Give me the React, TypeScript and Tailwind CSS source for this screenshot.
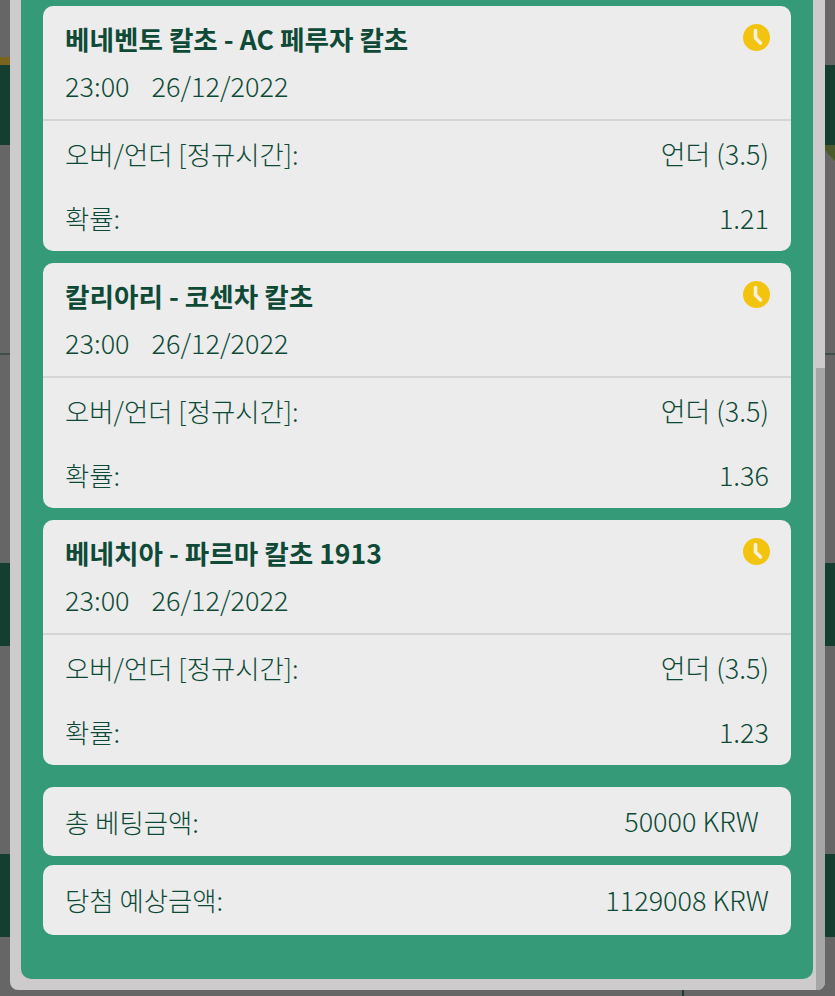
const font = { fontFamily: '"Noto Sans CJK KR", "Noto Sans", sans-serif' };

function Clock() {
  return (
    <svg width="27" height="27" viewBox="0 0 27 27" className="absolute right-[21px] top-[18px]">
      <circle cx="13.5" cy="13.5" r="13.5" fill="#f2c40f" />
      <path d="M12.5 6.5 V14 L17.5 19" fill="none" stroke="#f4f0dc" strokeWidth="3.6" strokeLinecap="round" strokeLinejoin="round" />
    </svg>
  );
}

function Row({ label, value, className = "" }: { label: string; value: string; className?: string }) {
  return (
    <div className={`flex items-center justify-between pl-[22px] pr-[22px] leading-[36px] font-light text-[#0c4a35] ${className}`}>
      <span className="text-[26.4px]">{label}</span>
      <span className="text-[27px]">{value}</span>
    </div>
  );
}

function Bet({ title, odds }: { title: string; odds: string }) {
  return (
    <div className="relative h-[245px] shrink-0 rounded-[10px] bg-[#ececec]">
      <div className="h-[115px] border-b-2 border-[#d5d5d5] pl-[22px] pt-[15px]">
        <div className="text-[26.6px] leading-[36px] font-bold text-[#0f4a37]">{title}</div>
        <div className="mt-[11px] flex gap-[22px] text-[27px] leading-[36px] font-light text-[#0c4a35]">
          <span>23:00</span>
          <span>26/12/2022</span>
        </div>
      </div>
      <Row label="오버/언더 [정규시간]:" value="언더 (3.5)" className="mt-[15px]" />
      <Row label="확률:" value={odds} className="mt-[28px]" />
      <Clock />
    </div>
  );
}

export default function App() {
  return (
    <div className="relative h-[996px] w-[835px] overflow-hidden bg-[#666666]" style={font}>
      <div className="flex flex-col">
        <div className="mt-[57px] h-[8px] w-[10px] bg-[#7a6420]" />
        <div className="h-[80px] w-full bg-[#143f30]" />
        <div className="h-[210px] border-b-2 border-[#3d4f47]" />
        <div className="mt-[208px] h-[83px] w-full bg-[#143f30]" />
        <div className="mt-[208px] h-[83px] w-full bg-[#143f30]" />
      </div>
      <svg width="10" height="20" viewBox="0 0 10 20" className="absolute left-[825px] top-[145px]">
        <path d="M0 0 H10 V16 L4 10 L0 5 Z" fill="#4a5a2a" />
      </svg>
      <div className="absolute left-[682px] top-[988px] h-[8px] w-[2px] bg-[#1f3a30]" />

      <div className="absolute bottom-[6px] left-[10px] flex h-[1100px] w-[815px] rounded-[8px] bg-[#cdcbcb] pb-[11px] pl-[11px]">
        <div className="flex w-[792px] flex-col justify-end rounded-[10px] bg-[#359a77] px-[22px] pb-[44px]">
          <div className="flex flex-col gap-[12px]">
            <Bet title="베네벤토 칼초 - AC 페루자 칼초" odds="1.21" />
            <Bet title="칼리아리 - 코센차 칼초" odds="1.36" />
            <Bet title="베네치아 - 파르마 칼초 1913" odds="1.23" />
          </div>
          <div className="mt-[22px] flex h-[69px] items-center justify-between rounded-[10px] bg-[#ececec] pl-[22px] pr-[32px] font-light text-[#0c4a35]">
            <span className="text-[26.4px]">총 베팅금액:</span>
            <span className="text-[27px]">50000 KRW</span>
          </div>
          <div className="mt-[9px] flex h-[70px] items-center justify-between rounded-[10px] bg-[#ececec] pl-[22px] pr-[22px] font-light text-[#0c4a35]">
            <span className="text-[26.4px]">당첨 예상금액:</span>
            <span className="text-[27px]">1129008 KRW</span>
          </div>
        </div>
        <div className="absolute bottom-0 right-0 h-[622px] w-[9px] rounded-br-[8px] bg-[#a6a6a6]" />
      </div>
    </div>
  );
}
